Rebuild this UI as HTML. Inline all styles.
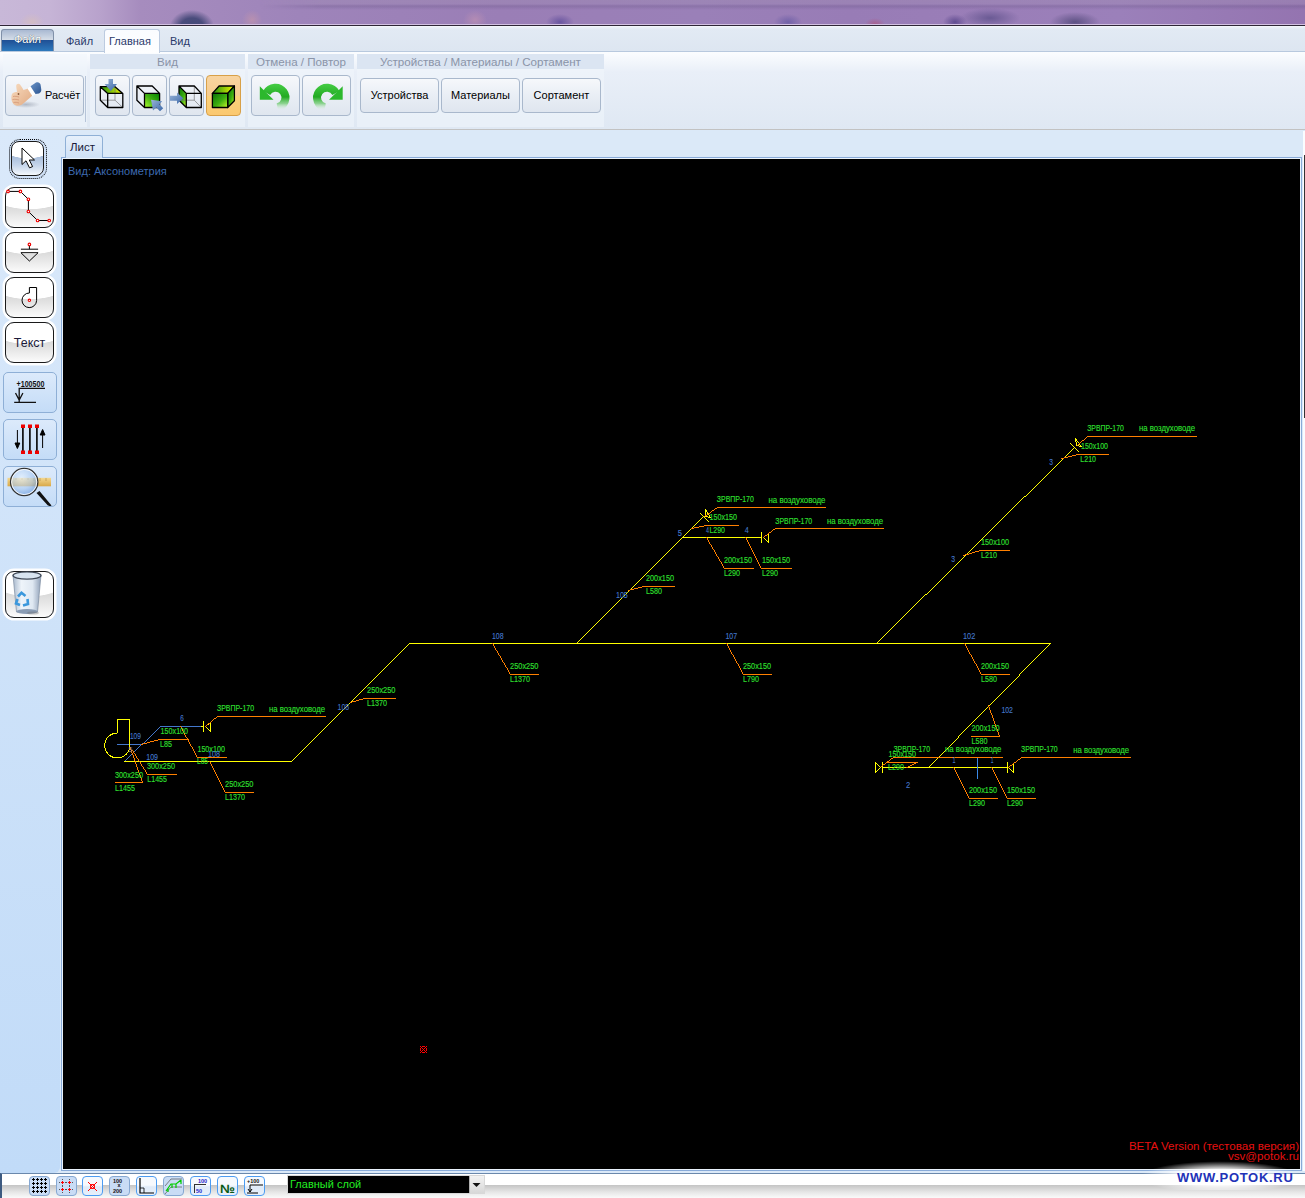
<!DOCTYPE html>
<html><head><meta charset="utf-8">
<style>
*{margin:0;padding:0;box-sizing:border-box}
html,body{width:1305px;height:1198px;overflow:hidden;background:#dbe9f8;font-family:"Liberation Sans",sans-serif;position:relative}
.a{position:absolute}
#top{left:0;top:0;width:1305px;height:26px;background:linear-gradient(rgba(255,255,255,0) 0,rgba(255,255,255,0) 24px,#d8c8e6 24px,#cbb8dc 25px,#2e2636 25px),radial-gradient(ellipse 22px 16px at 192px 26px,#454a78 0%,#4a4c7c 50%,rgba(90,80,130,0) 100%),radial-gradient(ellipse 12px 9px at 32px 22px,#d2bcc4 0%,rgba(210,188,196,0) 100%),radial-gradient(ellipse 10px 10px at 252px 20px,#b890b0 0%,rgba(184,144,176,0) 100%),radial-gradient(ellipse 12px 10px at 475px 20px,#b48cb4 0%,rgba(180,140,180,0) 100%),radial-gradient(ellipse 14px 8px at 560px 22px,#6a56a0 0%,rgba(106,86,160,0) 100%),radial-gradient(ellipse 14px 8px at 788px 22px,#7262a8 0%,rgba(114,98,168,0) 100%),radial-gradient(ellipse 30px 10px at 990px 18px,#6a5a94 0%,rgba(106,90,148,0) 100%),radial-gradient(ellipse 25px 10px at 1075px 22px,#5e5284 0%,rgba(94,82,132,0) 100%),radial-gradient(ellipse 12px 8px at 955px 22px,#604c90 0%,rgba(96,76,144,0) 100%),radial-gradient(ellipse 10px 6px at 875px 24px,#a86090 0%,rgba(168,96,144,0) 100%),linear-gradient(90deg,#c8b8d8 0,#c6b4d6 50px,#b8a2cc 100px,#a68cbe 140px,#a288bc 220px,#9e84ba 300px,#9a7eb6 500px,#9a80b8 700px,#987cb6 850px,#9a7eb8 1000px,#9b80ba 1120px,#9474b0 1305px)}
#tabs{left:0;top:26px;width:1305px;height:26px;background:linear-gradient(#f4f7fb 0,#e2eaf4 3px,#dde6f1 100%);border-bottom:1px solid #b8c9de}
#ribbon{left:0;top:52px;width:1305px;height:78px;background:linear-gradient(#fbfdff 0px,#e9eff8 20px,#dfe8f3 77px);border-bottom:1px solid #c2c2c2}
.grp{background:rgba(240,245,252,.55)}
.ghd{background:#dbe5f2;color:#8a94a8;font-size:11.6px;text-align:center;line-height:15px;height:15px;top:54px}
.rb{border:1px solid #a9b8cc;border-radius:4px;background:linear-gradient(#f6f8fb,#e9eef5 50%,#dfe6ef)}
.rbt{font-size:11px;color:#000;text-align:center}
#left{left:0;top:130px;width:60px;height:1043px;background:linear-gradient(#dae9fa,#c1dbf8);border-radius:0 6px 6px 0}
#canvas{left:61px;top:157px;width:1241px;height:1014px;border:1px solid #88aad8;box-shadow:inset 0 0 0 1px #eaf3fc;background:#000}
#bot{left:0;top:1173px;width:1305px;height:25px;border-top:1px solid #6a88ac;border-left:2px solid #3d5a80;background:linear-gradient(#fff 0,#fff 11px,#c4c4c4 11px,#e6e6e6 18px,#fafafa 24px)}
.lb{border:1.6px solid #1a1a1a;border-radius:9px;background:radial-gradient(ellipse 95% 55% at 50% 0%,#fff 0%,#fff 97%,rgba(255,255,255,0) 100%),linear-gradient(#d2d2d2 35%,#e4e4e4 65%,#fbfbfb 100%);box-shadow:0 0 0 2.5px rgba(255,255,255,.95)}
.lbs{border:1.6px solid #1a1a1a;border-radius:8px;background:radial-gradient(ellipse 95% 50% at 50% 0%,#fff 0%,#fff 97%,rgba(255,255,255,0) 100%),linear-gradient(#a4bad8 40%,#c4d4ea 70%,#f4f8fc 100%)}
.lbb{border:1px solid #8eafd6;border-radius:5px;background:linear-gradient(#dceafb,#c4dcf7)}
.sb{width:21px;height:20px;border:1.5px solid #86a8d2;border-radius:4px;background:#c9dcf5}
.sb2{width:21px;height:20px;border:1.5px solid #4c9cf2;border-radius:4px;background:linear-gradient(#f6f9fd 0,#f6f9fd 45%,#dfeaf8 55%,#e8f0fa 100%)}
</style></head><body>
<div id="top" class="a"></div>
<div class="a" style="left:260px;top:0;width:1045px;height:10px;background:linear-gradient(rgba(160,140,180,.45) 0,rgba(160,140,180,.35) 4px,rgba(110,90,140,.35) 6px,rgba(110,90,140,0) 10px);-webkit-mask-image:linear-gradient(90deg,transparent 0,#000 60px)"></div>
<div id="tabs" class="a"></div>
<div id="ribbon" class="a"></div>

<div class="a" style="left:1px;top:29px;width:53px;height:22px;border-radius:3px 4px 0 0;background:linear-gradient(#a9b9d2 0,#d6dee8 10px,#1f4f95 10px,#2f7dc0 22px);border:1px solid #8090a8;border-bottom:none"></div>
<div class="a" style="left:1px;top:33px;width:53px;text-align:center;font-size:11px;color:#fff;text-shadow:0 0 1px #234">Файл</div>
<div class="a" style="left:104px;top:29px;width:56px;height:24px;border:1px solid #bccbe0;border-bottom:none;border-radius:3px 3px 0 0;background:linear-gradient(#fafcff,#fdfeff)"></div>
<div class="a" style="left:66px;top:35px;font-size:11px;color:#2a3a6a">Файл</div>
<div class="a" style="left:109px;top:35px;font-size:11px;color:#2a3a6a">Главная</div>
<div class="a" style="left:170px;top:35px;font-size:11px;color:#2a3a6a">Вид</div>
<!-- groups -->
<div class="a grp" style="left:3px;top:54px;width:84px;height:73px"></div>
<div class="a" style="left:85px;top:76px;width:1px;height:46px;background:#b6c4d8"></div>
<div class="a grp" style="left:90px;top:54px;width:155px;height:73px"></div>
<div class="a grp" style="left:248px;top:54px;width:106px;height:73px"></div>
<div class="a grp" style="left:357px;top:54px;width:247px;height:73px"></div>
<div class="a ghd" style="left:90px;width:155px">Вид</div>
<div class="a ghd" style="left:248px;width:106px">Отмена / Повтор</div>
<div class="a ghd" style="left:357px;width:247px">Устройства / Материалы / Сортамент</div>
<!-- buttons -->
<div class="a rb" style="left:5px;top:75px;width:79px;height:41px"></div>
<div class="a" style="left:45px;top:89px;font-size:11px;color:#000">Расчёт</div>
<svg class="a" style="left:9px;top:80px" width="34" height="32" viewBox="0 0 34 32">
 <defs>
  <radialGradient id="sh" cx=".5" cy=".5" r=".5"><stop offset="0" stop-color="#8890a0" stop-opacity=".55"/><stop offset="1" stop-color="#8890a0" stop-opacity="0"/></radialGradient>
  <linearGradient id="sk" x1="0" y1="0" x2="1" y2="1"><stop offset="0" stop-color="#f8dcc0"/><stop offset="1" stop-color="#e0a880"/></linearGradient>
  <linearGradient id="cf" x1="0" y1="0" x2="1" y2="1"><stop offset="0" stop-color="#6a94c8"/><stop offset="1" stop-color="#2c5490"/></linearGradient>
 </defs>
 <ellipse cx="17" cy="24.5" rx="14" ry="3.5" fill="url(#sh)"/>
 <path d="M3 14 C1.5 18 2.5 24 7 25.5 C10 26.5 13 25 15.5 22.5 L24 15 L20.5 8 L14.5 10 C13.5 8 12 6 11 4.5 C10 3.2 7.2 3.6 7.2 5.8 C7.2 8 7.8 10 8 12 C6 12 4 12.5 3 14 Z" fill="url(#sk)"/>
 <path d="M4 16.5 C6 16 8.5 16.5 10 17 M3.5 19.5 C6 19 8.5 19.5 10 20 M4.5 22.5 C6.5 22 8.5 22.5 10 23" stroke="#d09070" stroke-width=".7" fill="none"/>
 <circle cx="9.5" cy="14" r=".9" fill="#8a5a3a"/>
 <path d="M18.5 8.5 L21.5 6.3 L26.5 14 L23.5 16.2 Z" fill="#fff"/>
 <path d="M21.5 6.3 L27 2.6 C29 1.6 31 2.6 31.6 4.8 L32.3 9.8 C32.4 11.6 31.3 12.8 30 13.6 L26.5 14 Z" fill="url(#cf)"/>
</svg>
<div class="a rb" style="left:95px;top:75px;width:35px;height:41px"></div>
<div class="a rb" style="left:132px;top:75px;width:35px;height:41px"></div>
<div class="a rb" style="left:169px;top:75px;width:35px;height:41px"></div>
<div class="a" style="left:206px;top:75px;width:35px;height:41px;border:1px solid #d8a048;border-radius:4px;background:linear-gradient(#f8d4a0,#f6cc90 50%,#fbd27c 52%,#fbc870)"></div>
<svg class="a" style="left:95px;top:75px" width="150" height="41" viewBox="0 0 150 41">
 <defs>
  <linearGradient id="gf" x1="0" y1="0" x2="1" y2="1"><stop offset="0" stop-color="#087008"/><stop offset=".55" stop-color="#3cae10"/><stop offset="1" stop-color="#c8f828"/></linearGradient>
  <linearGradient id="gf2" x1="1" y1="0" x2="0" y2="1"><stop offset="0" stop-color="#008000"/><stop offset=".5" stop-color="#40b010"/><stop offset="1" stop-color="#b0ff30"/></linearGradient>
  <linearGradient id="gt" x1="0" y1="0" x2="1" y2="0"><stop offset="0" stop-color="#1e9010"/><stop offset="1" stop-color="#f0f800"/></linearGradient>
  <linearGradient id="ar" x1="0" y1="0" x2="1" y2="1"><stop offset="0" stop-color="#9ab4d8"/><stop offset="1" stop-color="#3a68a8"/></linearGradient>
 </defs>
 <!-- cube1 -->
 <path d="M5.3 11.7 L20 11.7 L27.8 18.4 L12.7 18.4 Z" fill="url(#gt)"/>
 <g stroke="#777" stroke-width=".7" fill="none"><path d="M20 11.7 L20 25.2 L5.3 25.2 M20 25.2 L27.8 32.5"/></g>
 <g stroke="#000" stroke-width="1.3" fill="none" stroke-linejoin="round"><path d="M5.3 11.7 L20 11.7 L27.8 18.4 L27.8 32.5 L12.7 32.5 L5.3 25.2 Z M12.7 18.4 L27.8 18.4 M12.7 18.4 L12.7 32.5 M5.3 11.7 L12.7 18.4"/></g>
 <path d="M13.5 4 L18 4 L18 9 L22 9 L15.8 16 L9.5 9 L13.5 9 Z" fill="url(#ar)"/>
 <!-- cube2 -->
 <g transform="translate(37,0)">
 <path d="M12.5 18.4 L27.6 18.4 L27.6 32.5 L12.5 32.5 Z" fill="url(#gf2)"/>
 <g stroke="#000" stroke-width="1.3" fill="none" stroke-linejoin="round"><path d="M4.9 11 L20.2 11 L27.6 18.4 L27.6 32.5 L12.5 32.5 L4.9 25.2 Z M12.5 18.4 L27.6 18.4 M12.5 18.4 L12.5 32.5 M4.9 11 L12.5 18.4"/></g>
 <path d="M19 24.8 L30.2 26.3 L27.4 29.3 L31.2 33.2 L28 36.3 L24.2 32.4 L21 35.4 Z" fill="url(#ar)"/>
 </g>
 <!-- cube3 -->
 <g transform="translate(74,0)">
 <path d="M10 11 L17.3 18.4 L17.3 32.5 L10 25.2 Z" fill="url(#gf)"/>
 <g stroke="#777" stroke-width=".7" fill="none"><path d="M25.3 11 L25.3 25.2 L10 25.2 M25.3 25.2 L32.3 32.5"/></g>
 <g stroke="#000" stroke-width="1.3" fill="none" stroke-linejoin="round"><path d="M10 11 L25.3 11 L32.3 18.4 L32.3 32.5 L17.3 32.5 L10 25.2 Z M17.3 18.4 L32.3 18.4 M17.3 18.4 L17.3 32.5 M10 11 L17.3 18.4"/></g>
 <path d="M1 20.8 L8 20.8 L8 17.5 L14.3 23.3 L8 29 L8 25.8 L1 25.8 Z" fill="url(#ar)"/>
 </g>
 <!-- cube4 -->
 <g transform="translate(111,0)" stroke="#000" stroke-width="1.3" stroke-linejoin="round">
  <path d="M6.4 18.4 L13.1 11 L28.4 11 L21.7 18.4 Z" fill="url(#gt)"/>
  <path d="M21.7 18.4 L28.4 11 L28.4 25.8 L21.7 32.5 Z" fill="url(#gf)"/>
  <path d="M6.4 18.4 L21.7 18.4 L21.7 32.5 L6.4 32.5 Z" fill="url(#gf)"/>
 </g>
</svg>
<div class="a rb" style="left:251px;top:75px;width:49px;height:41px"></div>
<div class="a rb" style="left:302px;top:75px;width:49px;height:41px"></div>
<svg class="a" style="left:251px;top:75px" width="100" height="41" viewBox="0 0 100 41">
 <defs>
  <linearGradient id="ug" gradientUnits="userSpaceOnUse" x1="0" y1="9" x2="0" y2="35"><stop offset="0" stop-color="#44cc44"/><stop offset=".5" stop-color="#22aa22"/><stop offset=".75" stop-color="#66c866" stop-opacity=".7"/><stop offset="1" stop-color="#e0f4e0" stop-opacity="0"/></linearGradient>
 </defs>
 <g id="undo">
  <path d="M15.6 18 A10 10 0 1 1 26.5 32.5" fill="none" stroke="url(#ug)" stroke-width="8"/>
  <path d="M8.8 11.2 L8.8 24.8 L22.5 24.8 Z" fill="#2cb82c"/>
 </g>
 <g transform="translate(100.5,0) scale(-1,1)">
  <path d="M15.6 18 A10 10 0 1 1 26.5 32.5" fill="none" stroke="url(#ug)" stroke-width="8"/>
  <path d="M8.8 11.2 L8.8 24.8 L22.5 24.8 Z" fill="#2cb82c"/>
 </g>
</svg>
<div class="a rb" style="left:360px;top:78px;width:79px;height:35px"></div>
<div class="a rb" style="left:441px;top:78px;width:79px;height:35px"></div>
<div class="a rb" style="left:522px;top:78px;width:79px;height:35px"></div>
<div class="a rbt" style="left:360px;top:89px;width:79px">Устройства</div>
<div class="a rbt" style="left:441px;top:89px;width:79px">Материалы</div>
<div class="a rbt" style="left:522px;top:89px;width:79px">Сортамент</div>
<div id="left" class="a"></div>
<div id="canvas" class="a"></div><!--CANVAS--><svg class="a" style="left:0;top:0" width="1305" height="1198" viewBox="0 0 1305 1198">
<g shape-rendering="crispEdges">
<path fill="#ffff00" d="M1075 438h1v1H1075zM1075 439h2v1H1075zM1075 440h2v1H1075zM1075 441h1v1H1075zM1077 441h1v1H1077zM1076 442h1v1H1076zM1078 442h1v1H1078zM1070 443h1v1H1070zM1076 443h1v1H1076zM1079 443h1v1H1079zM1071 444h1v1H1071zM1076 444h1v1H1076zM1079 444h1v1H1079zM1072 445h1v1H1072zM1076 445h3v1H1076zM1080 445h1v1H1080zM1073 446h1v1H1073zM1079 446h3v1H1079zM1074 447h1v1H1074zM1073 448h1v1H1073zM1075 448h1v1H1075zM1072 449h1v1H1072zM1076 449h1v1H1076zM1071 450h1v1H1071zM1077 450h1v1H1077zM1070 451h1v1H1070zM1078 451h1v1H1078zM1069 452h1v1H1069zM1068 453h1v1H1068zM1067 454h1v1H1067zM1066 455h1v1H1066zM1065 456h1v1H1065zM1064 457h1v1H1064zM1063 458h1v1H1063zM1062 459h1v1H1062zM1061 460h1v1H1061zM1060 461h1v1H1060zM1059 462h1v1H1059zM1058 463h1v1H1058zM1057 464h1v1H1057zM1056 465h1v1H1056zM1055 466h1v1H1055zM1054 467h1v1H1054zM1053 468h1v1H1053zM1052 469h1v1H1052zM1051 470h1v1H1051zM1050 471h1v1H1050zM1049 472h1v1H1049zM1048 473h1v1H1048zM1047 474h1v1H1047zM1046 475h1v1H1046zM1045 476h1v1H1045zM1044 477h1v1H1044zM1043 478h1v1H1043zM1042 479h1v1H1042zM1041 480h1v1H1041zM1040 481h1v1H1040zM1039 482h1v1H1039zM1038 483h1v1H1038zM1037 484h1v1H1037zM1036 485h1v1H1036zM1035 486h1v1H1035zM1034 487h1v1H1034zM1033 488h1v1H1033zM1032 489h1v1H1032zM1031 490h1v1H1031zM1030 491h1v1H1030zM1029 492h1v1H1029zM1028 493h1v1H1028zM1027 494h1v1H1027zM1026 495h1v1H1026zM1024 496h2v1H1024zM1023 497h1v1H1023zM1022 498h1v1H1022zM1021 499h1v1H1021zM1020 500h1v1H1020zM1019 501h1v1H1019zM1018 502h1v1H1018zM1017 503h1v1H1017zM1016 504h1v1H1016zM1015 505h1v1H1015zM1014 506h1v1H1014zM1013 507h1v1H1013zM1012 508h1v1H1012zM705 509h1v1H705zM1011 509h1v1H1011zM705 510h2v1H705zM1010 510h1v1H1010zM705 511h2v1H705zM1009 511h1v1H1009zM705 512h1v1H705zM707 512h1v1H707zM1008 512h1v1H1008zM700 513h1v1H700zM705 513h1v1H705zM707 513h1v1H707zM1007 513h1v1H1007zM701 514h1v1H701zM705 514h1v1H705zM708 514h1v1H708zM1006 514h1v1H1006zM702 515h1v1H702zM705 515h1v1H705zM709 515h1v1H709zM1005 515h1v1H1005zM703 516h1v1H703zM705 516h3v1H705zM709 516h1v1H709zM1004 516h1v1H1004zM702 517h1v1H702zM704 517h1v1H704zM708 517h3v1H708zM1003 517h1v1H1003zM701 518h1v1H701zM705 518h1v1H705zM1002 518h1v1H1002zM700 519h1v1H700zM706 519h1v1H706zM1001 519h1v1H1001zM699 520h1v1H699zM707 520h1v1H707zM1000 520h1v1H1000zM698 521h1v1H698zM708 521h1v1H708zM999 521h1v1H999zM697 522h1v1H697zM998 522h1v1H998zM696 523h1v1H696zM997 523h1v1H997zM695 524h1v1H695zM996 524h1v1H996zM694 525h1v1H694zM995 525h1v1H995zM693 526h1v1H693zM994 526h1v1H994zM692 527h1v1H692zM993 527h1v1H993zM691 528h1v1H691zM992 528h1v1H992zM690 529h1v1H690zM991 529h1v1H991zM689 530h1v1H689zM990 530h1v1H990zM688 531h1v1H688zM989 531h1v1H989zM687 532h1v1H687zM761 532h1v1H761zM988 532h1v1H988zM686 533h1v1H686zM761 533h1v1H761zM768 533h1v1H768zM987 533h1v1H987zM685 534h1v1H685zM761 534h1v1H761zM767 534h2v1H767zM986 534h1v1H986zM684 535h1v1H684zM761 535h1v1H761zM765 535h2v1H765zM768 535h1v1H768zM985 535h1v1H985zM683 536h1v1H683zM761 536h1v1H761zM764 536h1v1H764zM768 536h1v1H768zM984 536h1v1H984zM682 537h80v1H682zM763 537h1v1H763zM768 537h1v1H768zM983 537h1v1H983zM681 538h1v1H681zM761 538h1v1H761zM764 538h1v1H764zM768 538h1v1H768zM982 538h1v1H982zM680 539h1v1H680zM761 539h1v1H761zM765 539h1v1H765zM768 539h1v1H768zM981 539h1v1H981zM679 540h1v1H679zM761 540h1v1H761zM766 540h1v1H766zM768 540h1v1H768zM980 540h1v1H980zM678 541h1v1H678zM761 541h1v1H761zM767 541h2v1H767zM979 541h1v1H979zM677 542h1v1H677zM761 542h1v1H761zM768 542h1v1H768zM978 542h1v1H978zM676 543h1v1H676zM977 543h1v1H977zM675 544h1v1H675zM976 544h1v1H976zM674 545h1v1H674zM975 545h1v1H975zM673 546h1v1H673zM974 546h1v1H974zM672 547h1v1H672zM973 547h1v1H973zM671 548h1v1H671zM972 548h1v1H972zM670 549h1v1H670zM971 549h1v1H971zM669 550h1v1H669zM970 550h1v1H970zM668 551h1v1H668zM969 551h1v1H969zM667 552h1v1H667zM968 552h1v1H968zM666 553h1v1H666zM967 553h1v1H967zM665 554h1v1H665zM966 554h1v1H966zM664 555h1v1H664zM965 555h1v1H965zM663 556h1v1H663zM964 556h1v1H964zM662 557h1v1H662zM963 557h1v1H963zM661 558h1v1H661zM962 558h1v1H962zM660 559h1v1H660zM961 559h1v1H961zM659 560h1v1H659zM960 560h1v1H960zM658 561h1v1H658zM959 561h1v1H959zM657 562h1v1H657zM958 562h1v1H958zM656 563h1v1H656zM957 563h1v1H957zM655 564h1v1H655zM956 564h1v1H956zM654 565h1v1H654zM955 565h1v1H955zM653 566h1v1H653zM954 566h1v1H954zM652 567h1v1H652zM953 567h1v1H953zM651 568h1v1H651zM952 568h1v1H952zM650 569h1v1H650zM951 569h1v1H951zM649 570h1v1H649zM950 570h1v1H950zM648 571h1v1H648zM949 571h1v1H949zM647 572h1v1H647zM948 572h1v1H948zM646 573h1v1H646zM947 573h1v1H947zM645 574h1v1H645zM946 574h1v1H946zM644 575h1v1H644zM945 575h1v1H945zM643 576h1v1H643zM944 576h1v1H944zM642 577h1v1H642zM943 577h1v1H943zM641 578h1v1H641zM942 578h1v1H942zM640 579h1v1H640zM941 579h1v1H941zM639 580h1v1H639zM940 580h1v1H940zM638 581h1v1H638zM939 581h1v1H939zM637 582h1v1H637zM938 582h1v1H938zM636 583h1v1H636zM937 583h1v1H937zM635 584h1v1H635zM936 584h1v1H936zM634 585h1v1H634zM935 585h1v1H935zM633 586h1v1H633zM934 586h1v1H934zM632 587h1v1H632zM933 587h1v1H933zM631 588h1v1H631zM932 588h1v1H932zM630 589h1v1H630zM931 589h1v1H931zM629 590h1v1H629zM930 590h1v1H930zM628 591h1v1H628zM929 591h1v1H929zM627 592h1v1H627zM928 592h1v1H928zM626 593h1v1H626zM927 593h1v1H927zM625 594h1v1H625zM925 594h2v1H925zM624 595h1v1H624zM924 595h1v1H924zM623 596h1v1H623zM923 596h1v1H923zM622 597h1v1H622zM922 597h1v1H922zM621 598h1v1H621zM921 598h1v1H921zM620 599h1v1H620zM920 599h1v1H920zM619 600h1v1H619zM919 600h1v1H919zM618 601h1v1H618zM918 601h1v1H918zM617 602h1v1H617zM917 602h1v1H917zM616 603h1v1H616zM916 603h1v1H916zM615 604h1v1H615zM915 604h1v1H915zM614 605h1v1H614zM914 605h1v1H914zM613 606h1v1H613zM913 606h1v1H913zM612 607h1v1H612zM912 607h1v1H912zM611 608h1v1H611zM911 608h1v1H911zM610 609h1v1H610zM910 609h1v1H910zM609 610h1v1H609zM909 610h1v1H909zM608 611h1v1H608zM908 611h1v1H908zM607 612h1v1H607zM907 612h1v1H907zM606 613h1v1H606zM906 613h1v1H906zM605 614h1v1H605zM905 614h1v1H905zM604 615h1v1H604zM904 615h1v1H904zM603 616h1v1H603zM903 616h1v1H903zM602 617h1v1H602zM902 617h1v1H902zM601 618h1v1H601zM901 618h1v1H901zM600 619h1v1H600zM900 619h1v1H900zM599 620h1v1H599zM899 620h1v1H899zM598 621h1v1H598zM898 621h1v1H898zM597 622h1v1H597zM897 622h1v1H897zM596 623h1v1H596zM896 623h1v1H896zM595 624h1v1H595zM895 624h1v1H895zM594 625h1v1H594zM894 625h1v1H894zM593 626h1v1H593zM893 626h1v1H893zM592 627h1v1H592zM892 627h1v1H892zM591 628h1v1H591zM891 628h1v1H891zM590 629h1v1H590zM890 629h1v1H890zM589 630h1v1H589zM889 630h1v1H889zM588 631h1v1H588zM888 631h1v1H888zM587 632h1v1H587zM887 632h1v1H887zM586 633h1v1H586zM886 633h1v1H886zM585 634h1v1H585zM885 634h1v1H885zM584 635h1v1H584zM884 635h1v1H884zM583 636h1v1H583zM883 636h1v1H883zM582 637h1v1H582zM882 637h1v1H882zM581 638h1v1H581zM881 638h1v1H881zM580 639h1v1H580zM880 639h1v1H880zM579 640h1v1H579zM879 640h1v1H879zM578 641h1v1H578zM878 641h1v1H878zM577 642h1v1H577zM877 642h1v1H877zM409 643h642v1H409zM408 644h1v1H408zM1049 644h1v1H1049zM407 645h1v1H407zM1048 645h1v1H1048zM406 646h1v1H406zM1047 646h1v1H1047zM405 647h1v1H405zM1046 647h1v1H1046zM404 648h1v1H404zM1045 648h1v1H1045zM403 649h1v1H403zM1044 649h1v1H1044zM402 650h1v1H402zM1043 650h1v1H1043zM401 651h1v1H401zM1042 651h1v1H1042zM400 652h1v1H400zM1041 652h1v1H1041zM399 653h1v1H399zM1040 653h1v1H1040zM398 654h1v1H398zM1039 654h1v1H1039zM397 655h1v1H397zM1038 655h1v1H1038zM396 656h1v1H396zM1037 656h1v1H1037zM395 657h1v1H395zM1036 657h1v1H1036zM394 658h1v1H394zM1035 658h1v1H1035zM393 659h1v1H393zM1034 659h1v1H1034zM392 660h1v1H392zM1033 660h1v1H1033zM391 661h1v1H391zM1032 661h1v1H1032zM390 662h1v1H390zM1031 662h1v1H1031zM389 663h1v1H389zM1030 663h1v1H1030zM388 664h1v1H388zM1029 664h1v1H1029zM387 665h1v1H387zM1028 665h1v1H1028zM386 666h1v1H386zM1027 666h1v1H1027zM385 667h1v1H385zM1026 667h1v1H1026zM384 668h1v1H384zM1025 668h1v1H1025zM383 669h1v1H383zM1024 669h1v1H1024zM382 670h1v1H382zM1023 670h1v1H1023zM381 671h1v1H381zM1022 671h1v1H1022zM380 672h1v1H380zM1021 672h1v1H1021zM379 673h1v1H379zM1020 673h1v1H1020zM378 674h1v1H378zM1019 674h1v1H1019zM377 675h1v1H377zM1019 675h1v1H1019zM376 676h1v1H376zM1018 676h1v1H1018zM375 677h1v1H375zM1017 677h1v1H1017zM374 678h1v1H374zM1016 678h1v1H1016zM373 679h1v1H373zM1015 679h1v1H1015zM372 680h1v1H372zM1014 680h1v1H1014zM371 681h1v1H371zM1013 681h1v1H1013zM370 682h1v1H370zM1012 682h1v1H1012zM369 683h1v1H369zM1011 683h1v1H1011zM368 684h1v1H368zM1010 684h1v1H1010zM367 685h1v1H367zM1009 685h1v1H1009zM366 686h1v1H366zM1008 686h1v1H1008zM365 687h1v1H365zM1007 687h1v1H1007zM364 688h1v1H364zM1006 688h1v1H1006zM363 689h1v1H363zM1005 689h1v1H1005zM362 690h1v1H362zM1004 690h1v1H1004zM361 691h1v1H361zM1003 691h1v1H1003zM360 692h1v1H360zM1002 692h1v1H1002zM359 693h1v1H359zM1001 693h1v1H1001zM358 694h1v1H358zM1000 694h1v1H1000zM357 695h1v1H357zM999 695h1v1H999zM356 696h1v1H356zM998 696h1v1H998zM355 697h1v1H355zM997 697h1v1H997zM354 698h1v1H354zM996 698h1v1H996zM353 699h1v1H353zM995 699h1v1H995zM352 700h1v1H352zM994 700h1v1H994zM351 701h1v1H351zM993 701h1v1H993zM350 702h1v1H350zM992 702h1v1H992zM349 703h1v1H349zM991 703h1v1H991zM348 704h1v1H348zM990 704h1v1H990zM347 705h1v1H347zM989 705h1v1H989zM346 706h1v1H346zM988 706h1v1H988zM345 707h1v1H345zM987 707h1v1H987zM344 708h1v1H344zM986 708h1v1H986zM343 709h1v1H343zM985 709h1v1H985zM342 710h1v1H342zM984 710h1v1H984zM341 711h1v1H341zM983 711h1v1H983zM340 712h1v1H340zM982 712h1v1H982zM339 713h1v1H339zM981 713h1v1H981zM338 714h1v1H338zM980 714h1v1H980zM337 715h1v1H337zM979 715h1v1H979zM336 716h1v1H336zM978 716h1v1H978zM335 717h1v1H335zM977 717h1v1H977zM334 718h1v1H334zM976 718h1v1H976zM333 719h1v1H333zM975 719h1v1H975zM332 720h1v1H332zM974 720h1v1H974zM203 721h1v1H203zM331 721h1v1H331zM973 721h1v1H973zM203 722h1v1H203zM210 722h1v1H210zM330 722h1v1H330zM972 722h1v1H972zM203 723h1v1H203zM209 723h2v1H209zM329 723h1v1H329zM971 723h1v1H971zM203 724h1v1H203zM207 724h2v1H207zM210 724h1v1H210zM328 724h1v1H328zM970 724h1v1H970zM203 725h1v1H203zM206 725h1v1H206zM210 725h1v1H210zM327 725h1v1H327zM969 725h1v1H969zM200 726h4v1H200zM205 726h1v1H205zM210 726h1v1H210zM326 726h1v1H326zM968 726h1v1H968zM203 727h1v1H203zM206 727h1v1H206zM210 727h1v1H210zM325 727h1v1H325zM967 727h1v1H967zM203 728h1v1H203zM207 728h1v1H207zM210 728h1v1H210zM324 728h1v1H324zM966 728h1v1H966zM203 729h1v1H203zM208 729h1v1H208zM210 729h1v1H210zM323 729h1v1H323zM965 729h1v1H965zM203 730h1v1H203zM209 730h2v1H209zM322 730h1v1H322zM964 730h1v1H964zM203 731h1v1H203zM210 731h1v1H210zM321 731h1v1H321zM963 731h1v1H963zM320 732h1v1H320zM962 732h1v1H962zM319 733h1v1H319zM961 733h1v1H961zM318 734h1v1H318zM960 734h1v1H960zM317 735h1v1H317zM959 735h1v1H959zM316 736h1v1H316zM958 736h1v1H958zM315 737h1v1H315zM958 737h1v1H958zM314 738h1v1H314zM957 738h1v1H957zM313 739h1v1H313zM956 739h1v1H956zM312 740h1v1H312zM955 740h1v1H955zM311 741h1v1H311zM954 741h1v1H954zM310 742h1v1H310zM953 742h1v1H953zM309 743h1v1H309zM952 743h1v1H952zM308 744h1v1H308zM951 744h1v1H951zM307 745h1v1H307zM950 745h1v1H950zM306 746h1v1H306zM949 746h1v1H949zM305 747h1v1H305zM948 747h1v1H948zM304 748h1v1H304zM947 748h1v1H947zM303 749h1v1H303zM946 749h1v1H946zM302 750h1v1H302zM945 750h1v1H945zM301 751h1v1H301zM944 751h1v1H944zM300 752h1v1H300zM943 752h1v1H943zM299 753h1v1H299zM942 753h1v1H942zM298 754h1v1H298zM941 754h1v1H941zM297 755h1v1H297zM940 755h1v1H940zM296 756h1v1H296zM939 756h1v1H939zM295 757h1v1H295zM938 757h1v1H938zM294 758h1v1H294zM937 758h1v1H937zM293 759h1v1H293zM936 759h1v1H936zM292 760h1v1H292zM935 760h1v1H935zM124 761h168v1H124zM934 761h1v1H934zM875 762h1v1H875zM882 762h1v1H882zM933 762h1v1H933zM1007 762h1v1H1007zM875 763h2v1H875zM882 763h1v1H882zM932 763h1v1H932zM1007 763h1v1H1007zM1013 763h1v1H1013zM875 764h1v1H875zM877 764h1v1H877zM882 764h1v1H882zM931 764h1v1H931zM1007 764h1v1H1007zM1012 764h2v1H1012zM875 765h1v1H875zM878 765h1v1H878zM882 765h1v1H882zM930 765h1v1H930zM1007 765h1v1H1007zM1010 765h2v1H1010zM1013 765h1v1H1013zM875 766h1v1H875zM879 766h1v1H879zM882 766h1v1H882zM929 766h1v1H929zM1007 766h1v1H1007zM1009 766h1v1H1009zM1013 766h1v1H1013zM875 767h1v1H875zM880 767h1v1H880zM882 767h127v1H882zM1013 767h1v1H1013zM875 768h1v1H875zM879 768h1v1H879zM882 768h1v1H882zM1007 768h1v1H1007zM1009 768h1v1H1009zM1013 768h1v1H1013zM875 769h1v1H875zM878 769h1v1H878zM882 769h1v1H882zM1007 769h1v1H1007zM1010 769h1v1H1010zM1013 769h1v1H1013zM875 770h1v1H875zM877 770h1v1H877zM882 770h1v1H882zM1007 770h1v1H1007zM1011 770h1v1H1011zM1013 770h1v1H1013zM875 771h2v1H875zM882 771h1v1H882zM1007 771h1v1H1007zM1012 771h2v1H1012zM875 772h1v1H875zM882 772h1v1H882zM1007 772h1v1H1007zM1013 772h1v1H1013z"/>
<path fill="#4478cc" d="M160 726h41v1H160zM159 727h1v1H159zM158 728h1v1H158zM157 729h1v1H157zM156 730h1v1H156zM155 731h1v1H155zM154 732h1v1H154zM153 733h1v1H153zM152 734h1v1H152zM151 735h1v1H151zM150 736h1v1H150zM149 737h1v1H149zM148 738h1v1H148zM147 739h1v1H147zM146 740h1v1H146zM145 741h1v1H145zM144 742h1v1H144zM142 743h2v1H142zM117 744h25v1H117zM140 745h1v1H140zM139 746h1v1H139zM138 747h1v1H138zM137 748h1v1H137zM136 749h1v1H136zM135 750h1v1H135zM134 751h1v1H134zM133 752h1v1H133zM132 753h1v1H132zM131 754h1v1H131zM130 755h1v1H130zM129 756h1v1H129zM128 757h1v1H128zM127 758h1v1H127zM126 759h1v1H126zM125 760h1v1H125z"/>
<path fill="#3a8ae8" d="M977 758h1v1H977zM977 759h1v1H977zM977 760h1v1H977zM977 761h1v1H977zM977 762h1v1H977zM977 763h1v1H977zM977 764h1v1H977zM977 765h1v1H977zM977 766h1v1H977zM977 767h1v1H977zM977 768h1v1H977zM977 769h1v1H977zM977 770h1v1H977zM977 771h1v1H977zM977 772h1v1H977zM977 773h1v1H977zM977 774h1v1H977zM977 775h1v1H977zM977 776h1v1H977zM977 777h1v1H977zM977 778h1v1H977z"/>
<path fill="#ff8000" d="M1087 436h110v1H1087zM1086 437h1v1H1086zM1085 438h1v1H1085zM1084 439h1v1H1084zM1082 440h2v1H1082zM1081 441h1v1H1081zM1080 442h1v1H1080zM1079 443h1v1H1079zM1078 444h1v1H1078zM1077 445h1v1H1077zM1076 454h33v1H1076zM1072 455h4v1H1072zM1068 456h4v1H1068zM1064 457h4v1H1064zM1061 458h3v1H1061zM717 507h109v1H717zM715 508h2v1H715zM714 509h1v1H714zM712 510h2v1H712zM711 511h1v1H711zM710 512h1v1H710zM708 513h2v1H708zM707 514h1v1H707zM705 515h2v1H705zM704 516h1v1H704zM704 525h35v1H704zM699 526h5v1H699zM694 527h5v1H694zM691 528h3v1H691zM775 528h109v1H775zM773 529h2v1H773zM772 530h1v1H772zM771 531h1v1H771zM769 532h2v1H769zM768 533h1v1H768zM767 534h1v1H767zM765 535h2v1H765zM764 536h1v1H764zM706 537h1v1H706zM745 537h1v1H745zM763 537h1v1H763zM707 538h1v1H707zM746 538h1v1H746zM707 539h1v1H707zM746 539h1v1H746zM708 540h1v1H708zM747 540h1v1H747zM708 541h1v1H708zM747 541h1v1H747zM709 542h1v1H709zM748 542h1v1H748zM709 543h1v1H709zM748 543h1v1H748zM710 544h1v1H710zM749 544h1v1H749zM711 545h1v1H711zM749 545h1v1H749zM711 546h1v1H711zM750 546h1v1H750zM712 547h1v1H712zM750 547h1v1H750zM712 548h1v1H712zM751 548h1v1H751zM713 549h1v1H713zM751 549h1v1H751zM714 550h1v1H714zM752 550h1v1H752zM979 550h31v1H979zM714 551h1v1H714zM752 551h1v1H752zM975 551h4v1H975zM715 552h1v1H715zM753 552h1v1H753zM972 552h3v1H972zM715 553h1v1H715zM753 553h1v1H753zM969 553h3v1H969zM716 554h1v1H716zM754 554h1v1H754zM965 554h4v1H965zM716 555h1v1H716zM754 555h1v1H754zM963 555h2v1H963zM717 556h1v1H717zM755 556h1v1H755zM718 557h1v1H718zM755 557h1v1H755zM718 558h1v1H718zM756 558h1v1H756zM719 559h1v1H719zM756 559h1v1H756zM719 560h1v1H719zM757 560h1v1H757zM720 561h1v1H720zM757 561h1v1H757zM721 562h1v1H721zM758 562h1v1H758zM721 563h1v1H721zM758 563h1v1H758zM722 564h1v1H722zM759 564h1v1H759zM722 565h1v1H722zM759 565h1v1H759zM723 566h1v1H723zM760 566h1v1H760zM723 567h1v1H723zM760 567h1v1H760zM724 568h30v1H724zM761 568h31v1H761zM642 586h33v1H642zM638 587h4v1H638zM634 588h4v1H634zM630 589h4v1H630zM628 590h2v1H628zM492 643h1v1H492zM726 643h1v1H726zM964 643h1v1H964zM493 644h1v1H493zM727 644h1v1H727zM965 644h1v1H965zM493 645h1v1H493zM727 645h1v1H727zM965 645h1v1H965zM494 646h1v1H494zM728 646h1v1H728zM966 646h1v1H966zM494 647h1v1H494zM728 647h1v1H728zM966 647h1v1H966zM495 648h1v1H495zM729 648h1v1H729zM967 648h1v1H967zM495 649h1v1H495zM729 649h1v1H729zM967 649h1v1H967zM496 650h1v1H496zM730 650h1v1H730zM968 650h1v1H968zM497 651h1v1H497zM730 651h1v1H730zM968 651h1v1H968zM497 652h1v1H497zM731 652h1v1H731zM969 652h1v1H969zM498 653h1v1H498zM731 653h1v1H731zM969 653h1v1H969zM498 654h1v1H498zM732 654h1v1H732zM970 654h1v1H970zM499 655h1v1H499zM733 655h1v1H733zM971 655h1v1H971zM500 656h1v1H500zM733 656h1v1H733zM971 656h1v1H971zM500 657h1v1H500zM734 657h1v1H734zM972 657h1v1H972zM501 658h1v1H501zM734 658h1v1H734zM972 658h1v1H972zM501 659h1v1H501zM735 659h1v1H735zM973 659h1v1H973zM502 660h1v1H502zM735 660h1v1H735zM973 660h1v1H973zM502 661h1v1H502zM736 661h1v1H736zM974 661h1v1H974zM503 662h1v1H503zM736 662h1v1H736zM974 662h1v1H974zM504 663h1v1H504zM737 663h1v1H737zM975 663h1v1H975zM504 664h1v1H504zM738 664h1v1H738zM976 664h1v1H976zM505 665h1v1H505zM738 665h1v1H738zM976 665h1v1H976zM505 666h1v1H505zM739 666h1v1H739zM977 666h1v1H977zM506 667h1v1H506zM739 667h1v1H739zM977 667h1v1H977zM507 668h1v1H507zM740 668h1v1H740zM978 668h1v1H978zM507 669h1v1H507zM740 669h1v1H740zM978 669h1v1H978zM508 670h1v1H508zM741 670h1v1H741zM979 670h1v1H979zM508 671h1v1H508zM741 671h1v1H741zM979 671h1v1H979zM509 672h1v1H509zM742 672h1v1H742zM980 672h1v1H980zM509 673h1v1H509zM742 673h1v1H742zM980 673h1v1H980zM510 674h29v1H510zM743 674h29v1H743zM981 674h29v1H981zM363 698h33v1H363zM359 699h4v1H359zM356 700h3v1H356zM352 701h4v1H352zM350 702h2v1H350zM988 705h1v1H988zM988 706h1v1H988zM989 707h1v1H989zM989 708h1v1H989zM989 709h1v1H989zM990 710h1v1H990zM990 711h1v1H990zM990 712h1v1H990zM991 713h1v1H991zM991 714h1v1H991zM992 715h1v1H992zM217 716h109v1H217zM992 716h1v1H992zM216 717h1v1H216zM992 717h1v1H992zM214 718h2v1H214zM993 718h1v1H993zM213 719h1v1H213zM993 719h1v1H993zM212 720h1v1H212zM993 720h1v1H993zM211 721h1v1H211zM994 721h1v1H994zM210 722h1v1H210zM994 722h1v1H994zM208 723h2v1H208zM994 723h1v1H994zM207 724h1v1H207zM995 724h1v1H995zM206 725h1v1H206zM995 725h1v1H995zM180 726h1v1H180zM205 726h1v1H205zM995 726h1v1H995zM181 727h1v1H181zM996 727h1v1H996zM181 728h1v1H181zM996 728h1v1H996zM182 729h1v1H182zM997 729h1v1H997zM182 730h1v1H182zM997 730h1v1H997zM183 731h1v1H183zM997 731h1v1H997zM183 732h1v1H183zM998 732h1v1H998zM184 733h1v1H184zM998 733h1v1H998zM184 734h1v1H184zM998 734h1v1H998zM185 735h1v1H185zM999 735h1v1H999zM185 736h1v1H185zM971 736h29v1H971zM186 737h1v1H186zM187 738h1v1H187zM158 739h31v1H158zM154 740h4v1H154zM188 740h1v1H188zM150 741h4v1H150zM188 741h1v1H188zM147 742h3v1H147zM189 742h1v1H189zM143 743h4v1H143zM189 743h1v1H189zM141 744h2v1H141zM190 744h1v1H190zM129 745h1v1H129zM190 745h1v1H190zM129 746h1v1H129zM191 746h1v1H191zM130 747h1v1H130zM192 747h1v1H192zM130 748h1v1H130zM192 748h1v1H192zM130 749h1v1H130zM193 749h1v1H193zM131 750h2v1H131zM193 750h1v1H193zM131 751h1v1H131zM133 751h1v1H133zM194 751h1v1H194zM131 752h1v1H131zM133 752h1v1H133zM194 752h1v1H194zM132 753h1v1H132zM134 753h1v1H134zM195 753h1v1H195zM132 754h1v1H132zM135 754h1v1H135zM195 754h1v1H195zM133 755h1v1H133zM135 755h1v1H135zM196 755h1v1H196zM133 756h1v1H133zM136 756h1v1H136zM196 756h1v1H196zM133 757h1v1H133zM136 757h1v1H136zM197 757h30v1H197zM893 757h110v1H893zM1021 757h110v1H1021zM134 758h1v1H134zM137 758h1v1H137zM891 758h2v1H891zM1020 758h1v1H1020zM134 759h1v1H134zM138 759h1v1H138zM890 759h1v1H890zM1018 759h2v1H1018zM134 760h1v1H134zM138 760h1v1H138zM889 760h1v1H889zM1017 760h1v1H1017zM135 761h1v1H135zM139 761h1v1H139zM209 761h1v1H209zM887 761h2v1H887zM1016 761h1v1H1016zM135 762h1v1H135zM140 762h1v1H140zM210 762h1v1H210zM886 762h32v1H886zM1014 762h2v1H1014zM135 763h1v1H135zM140 763h1v1H140zM210 763h1v1H210zM885 763h1v1H885zM914 763h2v1H914zM1013 763h1v1H1013zM136 764h1v1H136zM141 764h1v1H141zM211 764h1v1H211zM883 764h2v1H883zM912 764h2v1H912zM1012 764h1v1H1012zM136 765h1v1H136zM141 765h1v1H141zM211 765h1v1H211zM882 765h1v1H882zM910 765h2v1H910zM1010 765h2v1H1010zM136 766h1v1H136zM142 766h1v1H142zM212 766h1v1H212zM881 766h1v1H881zM908 766h2v1H908zM1009 766h1v1H1009zM137 767h1v1H137zM143 767h1v1H143zM212 767h1v1H212zM906 767h2v1H906zM953 767h1v1H953zM991 767h1v1H991zM1008 767h1v1H1008zM137 768h1v1H137zM143 768h1v1H143zM213 768h1v1H213zM954 768h1v1H954zM992 768h1v1H992zM137 769h1v1H137zM144 769h1v1H144zM213 769h1v1H213zM954 769h1v1H954zM992 769h1v1H992zM138 770h1v1H138zM145 770h1v1H145zM214 770h1v1H214zM955 770h1v1H955zM993 770h1v1H993zM138 771h1v1H138zM145 771h1v1H145zM214 771h1v1H214zM955 771h1v1H955zM993 771h1v1H993zM138 772h1v1H138zM146 772h1v1H146zM215 772h1v1H215zM956 772h1v1H956zM994 772h1v1H994zM139 773h1v1H139zM146 773h1v1H146zM215 773h1v1H215zM956 773h1v1H956zM994 773h1v1H994zM139 774h1v1H139zM147 774h30v1H147zM216 774h1v1H216zM957 774h1v1H957zM995 774h1v1H995zM140 775h1v1H140zM216 775h1v1H216zM957 775h1v1H957zM995 775h1v1H995zM140 776h1v1H140zM217 776h1v1H217zM958 776h1v1H958zM996 776h1v1H996zM140 777h1v1H140zM217 777h1v1H217zM958 777h1v1H958zM996 777h1v1H996zM141 778h1v1H141zM218 778h1v1H218zM959 778h1v1H959zM997 778h1v1H997zM141 779h1v1H141zM218 779h1v1H218zM959 779h1v1H959zM997 779h1v1H997zM141 780h1v1H141zM219 780h1v1H219zM960 780h1v1H960zM998 780h1v1H998zM142 781h1v1H142zM219 781h1v1H219zM960 781h1v1H960zM998 781h1v1H998zM115 782h28v1H115zM220 782h1v1H220zM961 782h1v1H961zM999 782h1v1H999zM220 783h1v1H220zM961 783h1v1H961zM999 783h1v1H999zM221 784h1v1H221zM962 784h1v1H962zM1000 784h1v1H1000zM221 785h1v1H221zM962 785h1v1H962zM1000 785h1v1H1000zM222 786h1v1H222zM963 786h1v1H963zM1001 786h1v1H1001zM222 787h1v1H222zM963 787h1v1H963zM1001 787h1v1H1001zM223 788h1v1H223zM964 788h1v1H964zM1002 788h1v1H1002zM223 789h1v1H223zM964 789h1v1H964zM1002 789h1v1H1002zM224 790h1v1H224zM965 790h1v1H965zM1003 790h1v1H1003zM224 791h1v1H224zM965 791h1v1H965zM1003 791h1v1H1003zM225 792h29v1H225zM966 792h1v1H966zM1004 792h1v1H1004zM966 793h1v1H966zM1004 793h1v1H1004zM967 794h1v1H967zM1005 794h1v1H1005zM967 795h1v1H967zM1005 795h1v1H1005zM968 796h1v1H968zM1006 796h1v1H1006zM968 797h1v1H968zM1006 797h1v1H1006zM969 798h29v1H969zM1007 798h29v1H1007z"/>
</g>
<path d="M117.5 733 L117.5 719.5 L129.5 719.5 L129.5 748 A12.5 12.5 0 1 1 117.5 733" fill="none" stroke="#ffff00" stroke-width="1" shape-rendering="crispEdges"/>
<g font-family="Liberation Sans" font-size="8.9" stroke-width="0.12">
<text x="160.6" y="734.3" fill="#30e030" stroke="#30e030" textLength="27.5" lengthAdjust="spacingAndGlyphs">150x100</text>
<text x="160" y="747.3" fill="#30e030" stroke="#30e030" textLength="12" lengthAdjust="spacingAndGlyphs">L85</text>
<text x="197.4" y="752.3" fill="#30e030" stroke="#30e030" textLength="27.5" lengthAdjust="spacingAndGlyphs">150x100</text>
<text x="197" y="764.3" fill="#30e030" stroke="#30e030" textLength="11" lengthAdjust="spacingAndGlyphs">L85</text>
<text x="147" y="769.3" fill="#30e030" stroke="#30e030" textLength="28" lengthAdjust="spacingAndGlyphs">300x250</text>
<text x="147.3" y="782.3" fill="#30e030" stroke="#30e030" textLength="19.7" lengthAdjust="spacingAndGlyphs">L1455</text>
<text x="115" y="778.3" fill="#30e030" stroke="#30e030" textLength="28" lengthAdjust="spacingAndGlyphs">300x250</text>
<text x="115" y="791.3" fill="#30e030" stroke="#30e030" textLength="20" lengthAdjust="spacingAndGlyphs">L1455</text>
<text x="217" y="711.3" fill="#30e030" stroke="#30e030" textLength="37" lengthAdjust="spacingAndGlyphs">ЗРВПР-170</text>
<text x="269" y="711.9" fill="#30e030" stroke="#30e030" textLength="56" lengthAdjust="spacingAndGlyphs">на воздуховоде</text>
<text x="225" y="787.0" fill="#30e030" stroke="#30e030" textLength="28.5" lengthAdjust="spacingAndGlyphs">250x250</text>
<text x="225" y="799.9" fill="#30e030" stroke="#30e030" textLength="20" lengthAdjust="spacingAndGlyphs">L1370</text>
<text x="367" y="693.3" fill="#30e030" stroke="#30e030" textLength="28.5" lengthAdjust="spacingAndGlyphs">250x250</text>
<text x="367" y="706.3" fill="#30e030" stroke="#30e030" textLength="20" lengthAdjust="spacingAndGlyphs">L1370</text>
<text x="510" y="669.3" fill="#30e030" stroke="#30e030" textLength="28.5" lengthAdjust="spacingAndGlyphs">250x250</text>
<text x="510" y="682.3" fill="#30e030" stroke="#30e030" textLength="20" lengthAdjust="spacingAndGlyphs">L1370</text>
<text x="646" y="581.0999999999999" fill="#30e030" stroke="#30e030" textLength="28" lengthAdjust="spacingAndGlyphs">200x150</text>
<text x="646" y="594.3" fill="#30e030" stroke="#30e030" textLength="16" lengthAdjust="spacingAndGlyphs">L580</text>
<text x="716.8" y="502.3" fill="#30e030" stroke="#30e030" textLength="37" lengthAdjust="spacingAndGlyphs">ЗРВПР-170</text>
<text x="768.5" y="502.8" fill="#30e030" stroke="#30e030" textLength="57" lengthAdjust="spacingAndGlyphs">на воздуховоде</text>
<text x="709.5" y="520.1999999999999" fill="#30e030" stroke="#30e030" textLength="27.5" lengthAdjust="spacingAndGlyphs">150x150</text>
<text x="709.4" y="533.1999999999999" fill="#30e030" stroke="#30e030" textLength="15.6" lengthAdjust="spacingAndGlyphs">L290</text>
<text x="775.2" y="523.8" fill="#30e030" stroke="#30e030" textLength="37" lengthAdjust="spacingAndGlyphs">ЗРВПР-170</text>
<text x="827" y="523.8" fill="#30e030" stroke="#30e030" textLength="56" lengthAdjust="spacingAndGlyphs">на воздуховоде</text>
<text x="724" y="563.4" fill="#30e030" stroke="#30e030" textLength="28" lengthAdjust="spacingAndGlyphs">200x150</text>
<text x="724" y="576.3" fill="#30e030" stroke="#30e030" textLength="16" lengthAdjust="spacingAndGlyphs">L290</text>
<text x="762" y="563.4" fill="#30e030" stroke="#30e030" textLength="28" lengthAdjust="spacingAndGlyphs">150x150</text>
<text x="762" y="576.3" fill="#30e030" stroke="#30e030" textLength="16" lengthAdjust="spacingAndGlyphs">L290</text>
<text x="743" y="669.3" fill="#30e030" stroke="#30e030" textLength="28" lengthAdjust="spacingAndGlyphs">250x150</text>
<text x="743" y="682.3" fill="#30e030" stroke="#30e030" textLength="16" lengthAdjust="spacingAndGlyphs">L790</text>
<text x="1087.2" y="431.3" fill="#30e030" stroke="#30e030" textLength="36.6" lengthAdjust="spacingAndGlyphs">ЗРВПР-170</text>
<text x="1139" y="431.3" fill="#30e030" stroke="#30e030" textLength="56" lengthAdjust="spacingAndGlyphs">на воздуховоде</text>
<text x="1081" y="449.1" fill="#30e030" stroke="#30e030" textLength="27" lengthAdjust="spacingAndGlyphs">150x100</text>
<text x="1080.3" y="462.2" fill="#30e030" stroke="#30e030" textLength="15.7" lengthAdjust="spacingAndGlyphs">L210</text>
<text x="981" y="545.3" fill="#30e030" stroke="#30e030" textLength="28" lengthAdjust="spacingAndGlyphs">150x100</text>
<text x="981" y="558.3" fill="#30e030" stroke="#30e030" textLength="16" lengthAdjust="spacingAndGlyphs">L210</text>
<text x="981" y="669.3" fill="#30e030" stroke="#30e030" textLength="28" lengthAdjust="spacingAndGlyphs">200x150</text>
<text x="981" y="682.3" fill="#30e030" stroke="#30e030" textLength="16" lengthAdjust="spacingAndGlyphs">L580</text>
<text x="971.5" y="731.3" fill="#30e030" stroke="#30e030" textLength="28" lengthAdjust="spacingAndGlyphs">200x150</text>
<text x="971.5" y="744.3" fill="#30e030" stroke="#30e030" textLength="16" lengthAdjust="spacingAndGlyphs">L580</text>
<text x="893.4" y="752.0" fill="#30e030" stroke="#30e030" textLength="36.6" lengthAdjust="spacingAndGlyphs">ЗРВПР-170</text>
<text x="945" y="752.3" fill="#30e030" stroke="#30e030" textLength="56.4" lengthAdjust="spacingAndGlyphs">на воздуховоде</text>
<text x="888.4" y="757.0999999999999" fill="#30e030" stroke="#30e030" textLength="27.6" lengthAdjust="spacingAndGlyphs">150x150</text>
<text x="888" y="770.1999999999999" fill="#30e030" stroke="#30e030" textLength="16" lengthAdjust="spacingAndGlyphs">L290</text>
<text x="1021" y="752.3" fill="#30e030" stroke="#30e030" textLength="36.7" lengthAdjust="spacingAndGlyphs">ЗРВПР-170</text>
<text x="1073.3" y="752.9" fill="#30e030" stroke="#30e030" textLength="55.7" lengthAdjust="spacingAndGlyphs">на воздуховоде</text>
<text x="969" y="792.8" fill="#30e030" stroke="#30e030" textLength="28" lengthAdjust="spacingAndGlyphs">200x150</text>
<text x="969" y="806.3" fill="#30e030" stroke="#30e030" textLength="16" lengthAdjust="spacingAndGlyphs">L290</text>
<text x="1007" y="792.8" fill="#30e030" stroke="#30e030" textLength="28" lengthAdjust="spacingAndGlyphs">150x150</text>
<text x="1007" y="806.3" fill="#30e030" stroke="#30e030" textLength="16" lengthAdjust="spacingAndGlyphs">L290</text>
<text x="180.2" y="721.1999999999999" fill="#4478cc" stroke="#4478cc" textLength="3.5" lengthAdjust="spacingAndGlyphs">6</text>
<text x="129.9" y="739.3" fill="#4478cc" stroke="#4478cc" textLength="11" lengthAdjust="spacingAndGlyphs">109</text>
<text x="146.3" y="760.3" fill="#4478cc" stroke="#4478cc" textLength="11.7" lengthAdjust="spacingAndGlyphs">109</text>
<text x="208" y="757.3" fill="#4478cc" stroke="#4478cc" textLength="12" lengthAdjust="spacingAndGlyphs">108</text>
<text x="337.6" y="710.3" fill="#4478cc" stroke="#4478cc" textLength="11.5" lengthAdjust="spacingAndGlyphs">108</text>
<text x="492" y="639.3" fill="#4478cc" stroke="#4478cc" textLength="11.6" lengthAdjust="spacingAndGlyphs">108</text>
<text x="616" y="598.0999999999999" fill="#4478cc" stroke="#4478cc" textLength="11.8" lengthAdjust="spacingAndGlyphs">105</text>
<text x="677.8" y="536.3" fill="#4478cc" stroke="#4478cc" textLength="4.2" lengthAdjust="spacingAndGlyphs">5</text>
<text x="706" y="533.1999999999999" fill="#4478cc" stroke="#4478cc" textLength="3" lengthAdjust="spacingAndGlyphs">4</text>
<text x="744.8" y="532.9" fill="#4478cc" stroke="#4478cc" textLength="4" lengthAdjust="spacingAndGlyphs">4</text>
<text x="725.4" y="639.3" fill="#4478cc" stroke="#4478cc" textLength="11.8" lengthAdjust="spacingAndGlyphs">107</text>
<text x="1049.3" y="465.0" fill="#4478cc" stroke="#4478cc" textLength="3.7" lengthAdjust="spacingAndGlyphs">3</text>
<text x="951.2" y="562.3" fill="#4478cc" stroke="#4478cc" textLength="3.8" lengthAdjust="spacingAndGlyphs">3</text>
<text x="963" y="639.3" fill="#4478cc" stroke="#4478cc" textLength="12.3" lengthAdjust="spacingAndGlyphs">102</text>
<text x="1001.4" y="713.0999999999999" fill="#4478cc" stroke="#4478cc" textLength="11.6" lengthAdjust="spacingAndGlyphs">102</text>
<text x="952.4" y="763.3" fill="#4478cc" stroke="#4478cc" textLength="3" lengthAdjust="spacingAndGlyphs">1</text>
<text x="990.8" y="763.0999999999999" fill="#4478cc" stroke="#4478cc" textLength="2.7" lengthAdjust="spacingAndGlyphs">1</text>
<text x="906" y="788.1999999999999" fill="#4478cc" stroke="#4478cc" textLength="4.2" lengthAdjust="spacingAndGlyphs">2</text>
<text x="128.5" y="752.3" fill="#9a8a9a" font-size="7">5</text>
</g>
<g fill="#ff0000" shape-rendering="crispEdges">
<rect x="420" y="1046" width="1" height="1"/>
<rect x="422" y="1046" width="1" height="1"/>
<rect x="423" y="1046" width="1" height="1"/>
<rect x="424" y="1046" width="1" height="1"/>
<rect x="426" y="1046" width="1" height="1"/>
<rect x="421" y="1047" width="1" height="1"/>
<rect x="425" y="1047" width="1" height="1"/>
<rect x="420" y="1048" width="1" height="1"/>
<rect x="422" y="1048" width="1" height="1"/>
<rect x="424" y="1048" width="1" height="1"/>
<rect x="426" y="1048" width="1" height="1"/>
<rect x="420" y="1049" width="1" height="1"/>
<rect x="423" y="1049" width="1" height="1"/>
<rect x="426" y="1049" width="1" height="1"/>
<rect x="420" y="1050" width="1" height="1"/>
<rect x="422" y="1050" width="1" height="1"/>
<rect x="424" y="1050" width="1" height="1"/>
<rect x="426" y="1050" width="1" height="1"/>
<rect x="421" y="1051" width="1" height="1"/>
<rect x="425" y="1051" width="1" height="1"/>
<rect x="420" y="1052" width="1" height="1"/>
<rect x="422" y="1052" width="1" height="1"/>
<rect x="423" y="1052" width="1" height="1"/>
<rect x="424" y="1052" width="1" height="1"/>
<rect x="426" y="1052" width="1" height="1"/>
</g></svg><!--/CANVAS-->
<div class="a" style="left:9px;top:139px;width:38px;height:40px;border:1px dotted #000;border-radius:11px;background:#cfe0f6"></div>
<div class="a lbs" style="left:11px;top:141px;width:33px;height:35px"></div>
<div class="a lb" style="left:5px;top:187px;width:49px;height:41px"></div>
<div class="a lb" style="left:5px;top:232px;width:49px;height:41px"></div>
<div class="a lb" style="left:5px;top:277px;width:49px;height:41px"></div>
<div class="a lb" style="left:5px;top:322px;width:49px;height:41px"></div>
<div class="a lbb" style="left:3px;top:372px;width:54px;height:41px"></div>
<div class="a lbb" style="left:3px;top:419px;width:54px;height:41px"></div>
<div class="a lbb" style="left:3px;top:466px;width:54px;height:41px"></div>
<div class="a lb" style="left:5px;top:571px;width:49px;height:47px"></div>
<div class="a" style="left:5px;top:336px;width:49px;text-align:center;font-size:12.5px;color:#1a1a3a">Текст</div>
<svg class="a" style="left:0;top:130px" width="60" height="500" viewBox="0 130 60 500">
 <path d="M22 148 L22 164.5 L26 160.8 L29.5 167.8 L32.6 166.6 L29.3 160 L34.5 160 Z" fill="#fff" stroke="#000" stroke-width="1" stroke-linejoin="round"/>
 <g fill="none" stroke="#000" stroke-width="1"><path d="M8 191.4 L20.4 191.4 L28.4 199.3 L28.4 211.5 L37.6 220.5 L49.2 220.5"/></g>
 <g fill="#fff" stroke="#e00" stroke-width="1.1">
  <circle cx="8" cy="191.4" r="1.3"/><circle cx="20.4" cy="191.4" r="1.3"/><circle cx="28.4" cy="199.3" r="1.3"/><circle cx="28.4" cy="211.5" r="1.3"/><circle cx="37.6" cy="220.5" r="1.3"/><circle cx="49.2" cy="220.5" r="1.3"/>
 </g>
 <g fill="none" stroke="#000" stroke-width="1"><path d="M29.4 244.4 L29.4 249.2 M20.9 249.2 L38.1 249.2 M20.9 252.7 L38.1 252.7 L29.4 261 Z"/></g>
 <circle cx="29.4" cy="244.4" r="1.3" fill="#fff" stroke="#e00" stroke-width="1.1"/>
 <g fill="none" stroke="#000" stroke-width="1"><path d="M29.4 287.5 L36.6 287.5 L36.6 300.5 A7.3 7.3 0 1 1 29.4 293 Z"/></g>
 <circle cx="29.4" cy="300.3" r="1.2" fill="#fff" stroke="#e00" stroke-width="1.1"/>
 <text x="16.5" y="386.5" font-family="Liberation Sans" font-weight="bold" font-size="8.5" fill="#111" textLength="28" lengthAdjust="spacingAndGlyphs">+100500</text>
 <g fill="none" stroke="#111" stroke-width="1.3"><path d="M45 388.4 L19.2 388.4 L19.2 402 M15.5 393 L19.2 400 L22.9 393 M14.2 402.3 L36 402.3"/></g>
 <g stroke="#000" stroke-width="1.6"><path d="M22.9 427 L22.9 452 M29.9 427 L29.9 452 M36.9 427 L36.9 452"/></g>
 <g fill="#e00"><rect x="21" y="424.5" width="4" height="3.5"/><rect x="28" y="424.5" width="4" height="3.5"/><rect x="35" y="424.5" width="4" height="3.5"/><rect x="21" y="450.5" width="4" height="3.5"/><rect x="28" y="450.5" width="4" height="3.5"/><rect x="35" y="450.5" width="4" height="3.5"/></g>
 <g fill="#000" stroke="#000" stroke-width="1"><path d="M17.4 430 L17.4 447" fill="none"/><path d="M15 443 L17.4 448.5 L19.8 443 Z"/><path d="M42.6 448 L42.6 431" fill="none"/><path d="M40.2 435 L42.6 429.5 L45 435 Z"/></g>
 <defs>
  <linearGradient id="rul" x1="0" y1="0" x2="0" y2="1"><stop offset="0" stop-color="#f4d890"/><stop offset="1" stop-color="#d8a848"/></linearGradient>
  <radialGradient id="lens" cx=".4" cy=".35" r=".7"><stop offset="0" stop-color="#e8f4ff"/><stop offset=".6" stop-color="#a8c8f0"/><stop offset="1" stop-color="#5a90d8"/></radialGradient>
  <linearGradient id="can" x1="0" y1="0" x2="1" y2="0"><stop offset="0" stop-color="#a8b8cc"/><stop offset=".3" stop-color="#eef4fa"/><stop offset=".7" stop-color="#dfe8f2"/><stop offset="1" stop-color="#8fa0b8"/></linearGradient>
 </defs>
 <rect x="7.5" y="477.8" width="43.5" height="8.5" fill="url(#rul)"/>
 <g stroke="#a07830" stroke-width=".5"><path d="M40 478 L40 481 M46 478 L46 481 M34 478 L34 481 M28 478 L28 480 M22 478 L22 480 M16 478 L16 480"/></g>
 <path d="M36.5 493 L47 504.5 C48 506 50.5 506.5 51.5 505.5 L39.5 491 Z" fill="#111"/>
 <circle cx="24.2" cy="482" r="13.2" fill="url(#lens)" opacity=".62"/>
 <circle cx="24.2" cy="482" r="13.6" fill="none" stroke="#333" stroke-width="1.4"/>
 <circle cx="24.2" cy="482" r="12.6" fill="none" stroke="#fff" stroke-width=".9"/>
 <path d="M13 575 L41 575 L37.5 612 L16.5 612 Z" fill="url(#can)" stroke="#7c8ca0" stroke-width=".7"/>
 <ellipse cx="27" cy="575.5" rx="14" ry="3.6" fill="#d8e4f0" stroke="#404a58" stroke-width="1.3"/>
 <ellipse cx="27" cy="611.5" rx="10.5" ry="2.6" fill="#8a9cb4"/>
 <ellipse cx="33" cy="613" rx="6" ry="1.6" fill="#666" opacity=".35"/>
 <g fill="none" stroke="#3c98dc" stroke-width="2.6" stroke-linecap="butt">
  <path d="M18 596.5 L21.5 592.8 L25.5 596"/>
  <path d="M27.5 599 L28 604 L23 605.5"/>
  <path d="M20 605 L16 603.5 L17.5 599"/>
 </g>
 </svg>

<div id="bot" class="a"></div>

<div class="a" style="left:65px;top:135px;width:38px;height:23px;border:1px solid #8fb0d6;border-bottom:none;border-radius:4px 4px 0 0;background:linear-gradient(#e6f0fb,#cfe1f6)"></div>
<div class="a" style="left:70px;top:141px;font-size:11.5px;color:#1a1a3a">Лист</div>
<div class="a" style="left:68px;top:165px;font-size:11px;color:#3d6ab0">Вид: Аксонометрия</div>
<div class="a" style="left:1300px;top:1130px;width:0;height:0"></div>
<div class="a" style="right:6px;top:1141px;font-size:11.6px;color:#e81010;text-align:right;line-height:10px">BETA Version (тестовая версия)<br>vsv@potok.ru</div>
<div class="a" style="left:1140px;top:1158px;width:160px;height:32px;background:radial-gradient(ellipse 50% 50% at 50% 60%,rgba(255,255,255,1) 45%,rgba(255,255,255,0) 100%)"></div>
<div class="a" style="left:1177px;top:1170px;font-size:13px;font-weight:bold;color:#2233b8;letter-spacing:0.7px">WWW.POTOK.RU</div>
<div class="a" style="left:1303px;top:131px;width:2px;height:1040px;background:#fafcff"></div>
<div class="a" style="left:1304px;top:155px;width:1px;height:263px;background:#333"></div>

<div class="a sb" style="left:29px;top:1176px"></div>
<div class="a sb" style="left:56px;top:1176px"></div>
<div class="a sb2" style="left:82px;top:1176px"></div>
<div class="a sb" style="left:109px;top:1176px"></div>
<div class="a sb2" style="left:136px;top:1176px"></div>
<div class="a sb" style="left:163px;top:1176px"></div>
<div class="a sb2" style="left:190px;top:1176px"></div>
<div class="a sb2" style="left:217px;top:1176px"></div>
<div class="a sb2" style="left:244px;top:1176px"></div>
<svg class="a" style="left:0;top:1170px" width="270" height="28" viewBox="0 1170 270 28">
<path fill="#000" d="M32 1179h3v1h-3zM33 1178h1v3h-1zM32 1183h3v1h-3zM33 1182h1v3h-1zM32 1187h3v1h-3zM33 1186h1v3h-1zM32 1191h3v1h-3zM33 1190h1v3h-1zM36 1179h3v1h-3zM37 1178h1v3h-1zM36 1183h3v1h-3zM37 1182h1v3h-1zM36 1187h3v1h-3zM37 1186h1v3h-1zM36 1191h3v1h-3zM37 1190h1v3h-1zM40 1179h3v1h-3zM41 1178h1v3h-1zM40 1183h3v1h-3zM41 1182h1v3h-1zM40 1187h3v1h-3zM41 1186h1v3h-1zM40 1191h3v1h-3zM41 1190h1v3h-1zM44 1179h3v1h-3zM45 1178h1v3h-1zM44 1183h3v1h-3zM45 1182h1v3h-1zM44 1187h3v1h-3zM45 1186h1v3h-1zM44 1191h3v1h-3zM45 1190h1v3h-1z"/>
<path fill="#555" d="M62 1179h1v1h-1zM69 1179h1v1h-1zM62 1192h1v1h-1zM69 1192h1v1h-1zM59 1182h1v1h-1zM72 1182h1v1h-1zM59 1189h1v1h-1zM72 1189h1v1h-1zM65 1182h2v1h-2zM65 1189h2v1h-2zM62 1185h1v2h-1zM69 1185h1v2h-1z"/>
<path fill="#f00" d="M61 1182h3v1h-3zM62 1181h1v3h-1zM61 1189h3v1h-3zM62 1188h1v3h-1zM68 1182h3v1h-3zM69 1181h1v3h-1zM68 1189h3v1h-3zM69 1188h1v3h-1z"/>
<g stroke="#f00" stroke-width="1" fill="none"><path d="M88 1182 L97 1191 M97 1182 L88 1191"/><rect x="90.5" y="1184.5" width="4" height="4" rx="1.5"/></g>
 <g font-family="Liberation Sans" font-weight="bold" font-size="5.5" fill="#111"><text x="113" y="1182.5">100</text><text x="117.5" y="1187">x</text><text x="113" y="1193">200</text></g>
 <g stroke="#000" stroke-width="1.2" fill="none"><path d="M140 1178 L140 1193 L154 1193"/></g><g stroke="#000" stroke-width=".8" fill="none"><path d="M140 1188 L144 1188 L144 1193"/></g>
 <g stroke="#666" stroke-width=".8" fill="none"><path d="M165 1186 L171 1179 L182 1179 M165 1194 L171 1187 L182 1187"/></g>
 <g stroke="#0c0" stroke-width="1.2" fill="none"><path d="M166 1191 L171 1184 L176 1184 L181 1180 M168 1188 L168 1192 M172 1184 L172 1188 M176 1184 L176 1188 M181 1180 L181 1184"/></g>
 <g font-family="Liberation Sans" font-weight="bold" font-size="5.5" fill="#2222cc"><text x="198" y="1182.5">100</text><text x="196" y="1192.5">50</text></g>
 <g stroke="#000" stroke-width=".8" fill="none"><path d="M194 1184.5 L206 1184.5 M194.5 1185 L194.5 1193"/></g>
 <text x="220" y="1192.5" font-family="Liberation Sans" font-weight="bold" font-size="12" fill="#0a5a14" textLength="15" lengthAdjust="spacingAndGlyphs">№</text>
 <g font-family="Liberation Sans" font-weight="bold" font-size="5.5" fill="#111"><text x="247" y="1182.5">+100</text></g>
 <g stroke="#000" stroke-width="1" fill="none"><path d="M263 1185 L250 1185 L250 1192 M248 1189 L250 1192 L252 1189 M247 1193 L258 1193"/></g>
</svg>
<div class="a" style="left:287px;top:1175px;width:198px;height:19px;border:1px solid #d8d8d8;background:#000"></div>
<div class="a" style="left:469px;top:1176px;width:15px;height:17px;background:linear-gradient(#f2f2f2,#d8d8d8);border-left:1px solid #b0b0b0"></div>
<svg class="a" style="left:469px;top:1176px" width="15" height="17"><path d="M3.5 7 L11.5 7 L7.5 11 Z" fill="#111"/></svg>
<div class="a" style="left:290px;top:1178px;font-size:11px;color:#22ee22">Главный слой</div>
</body></html>
